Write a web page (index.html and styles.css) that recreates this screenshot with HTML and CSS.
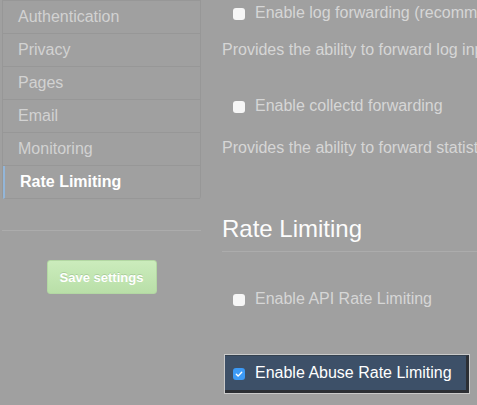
FILE: index.html
```html
<!DOCTYPE html>
<html lang="en">
<head>
<meta charset="utf-8">
<title>Rate Limiting settings</title>
<link rel="stylesheet" href="styles.css">
</head>
<body>
<div class="page">
  <aside class="sidebar">
    <ul class="menu">
      <li class="menu-item">Authentication</li>
      <li class="menu-item">Privacy</li>
      <li class="menu-item">Pages</li>
      <li class="menu-item">Email</li>
      <li class="menu-item">Monitoring</li>
      <li class="menu-item active">Rate Limiting</li>
    </ul>
    <div class="divider"></div>
    <div class="actions">
      <button class="btn-save" type="button">Save settings</button>
    </div>
  </aside>
  <main class="content">
    <div class="option first"><span class="check"></span><span class="label">Enable log forwarding (recommended)</span></div>
    <p class="note note-1">Provides the ability to forward log input to a remote syslog server.</p>
    <div class="option option-2"><span class="check"></span><span class="label">Enable collectd forwarding</span></div>
    <p class="note note-2">Provides the ability to forward statistics to an external collectd server.</p>
    <h2 class="heading">Rate Limiting</h2>
    <div class="rule"></div>
    <div class="option option-api"><span class="check"></span><span class="label">Enable API Rate Limiting</span></div>
    <div class="highlight">
      <div class="highlight-inner">
        <span class="check checked"><svg viewBox="0 0 12 12" width="12" height="12"><path d="M3.3 6.3 L5.1 8.1 L8.7 4.2" fill="none" stroke="#ffffff" stroke-width="1.4" stroke-linecap="round" stroke-linejoin="round"/></svg></span>
        <span class="label label-strong">Enable Abuse Rate Limiting</span>
      </div>
    </div>
  </main>
</div>
</body>
</html>
```

FILE: styles.css
```css
html, body {
  margin: 0;
  padding: 0;
}
body {
  background: #a0a0a0;
  font-family: "Liberation Sans", Arial, Helvetica, sans-serif;
  overflow: hidden;
  width: 477px;
  height: 405px;
}
.page {
  display: flex;
  align-items: flex-start;
  gap: 21px;
}
.sidebar {
  flex: 0 0 198px;
  margin-left: 2px;
}
.menu {
  list-style: none;
  margin: 0;
  padding: 0;
  border: 1px solid #979797;
  border-bottom: 0;
  border-radius: 0 0 3px 3px;
}
.menu-item {
  height: 32px;
  line-height: 32px;
  font-size: 16px;
  color: #d2d2d2;
  padding-left: 15px;
  border-bottom: 1px solid #979797;
  white-space: nowrap;
}
.menu-item.active {
  border-left: 2px solid #93b6d9;
  padding-left: 15px;
  margin-left: 0;
  color: #ffffff;
  font-weight: bold;
}
.divider {
  margin-top: 31px;
  height: 1px;
  width: 199px;
  background: #acacac;
}
.actions {
  display: flex;
  justify-content: center;
  margin-top: 29px;
  width: 199px;
}
.btn-save {
  width: 110px;
  height: 34px;
  border: 1px solid #b3d8a3;
  border-radius: 3px;
  background: linear-gradient(#cbecbc, #b9dfa8);
  color: #ffffff;
  font-family: "Liberation Sans", Arial, Helvetica, sans-serif;
  font-size: 13px;
  font-weight: bold;
  text-shadow: 0 -1px 0 rgba(120, 160, 110, 0.35);
  padding: 0;
}
.content {
  flex: 0 0 620px;
  padding-top: 3px;
}
.option {
  display: flex;
  align-items: center;
  height: 20px;
  padding-left: 11px;
  font-size: 16px;
  line-height: 20px;
  color: #d6d6d6;
  white-space: nowrap;
}
.check {
  flex: 0 0 12px;
  width: 12px;
  height: 12px;
  border-radius: 3px;
  background: #f6f6f6;
  margin-right: 10px;
  margin-top: 1px;
  display: inline-flex;
}
.check.checked {
  background: #3c9af6;
}
.note {
  margin: 17px 0 0 0;
  font-size: 16px;
  line-height: 20px;
  color: #d6d6d6;
  white-space: nowrap;
}
.option-2 {
  margin-top: 36px;
}
.note-2 {
  margin-top: 22px;
}
.heading {
  margin: 56px 0 0 0;
  font-size: 24px;
  line-height: 30px;
  font-weight: normal;
  color: #fcfcfc;
}
.rule {
  margin-top: 7px;
  height: 1px;
  background: #acacac;
}
.option-api {
  margin-top: 37px;
}
.highlight {
  margin-top: 45px;
  margin-left: 2px;
  width: 246px;
  height: 40px;
  box-sizing: border-box;
  border: 1px solid #cacaca;
}
.highlight-inner {
  box-sizing: border-box;
  height: 38px;
  display: flex;
  align-items: center;
  padding-left: 8px;
  background: #3d5068;
  border-top: 1px solid #34414f;
  border-right: 3px solid #2c2f34;
  border-bottom: 3px solid #2c2f34;
}
.label-strong {
  font-size: 16px;
  line-height: 20px;
  color: #ffffff;
  white-space: nowrap;
}
```
